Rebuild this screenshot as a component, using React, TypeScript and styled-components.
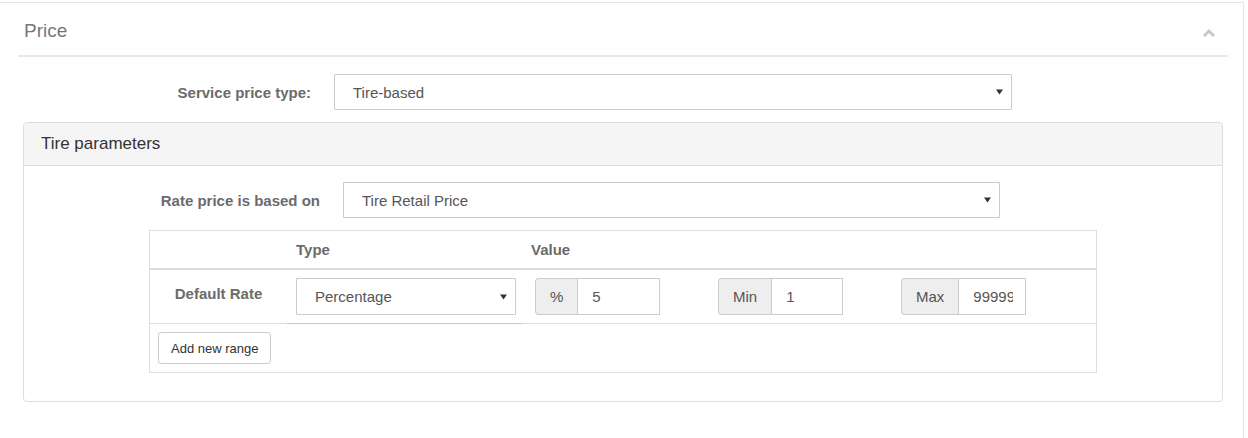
import styled, { createGlobalStyle } from 'styled-components'

const GlobalStyle = createGlobalStyle`
  body {
    margin: 0;
    background: #ffffff;
    font-family: "Liberation Sans", Arial, Helvetica, sans-serif;
    color: #555555;
  }
`

//styled-components
const Page = styled.div`
  padding-top: 2px;
  height: 436px;
`

const Section = styled.section`
  box-sizing: border-box;
  width: 1244px;
  height: 436px;
  border-top: 1px solid #e6e6e6;
  border-right: 1px solid #e6e6e6;
`

const SectionHeader = styled.div`
  display: flex;
  align-items: center;
  justify-content: space-between;
  margin: 0 15px 0 18px;
  padding: 17px 12px 14px 6px;
  border-bottom: 2px solid #e8e8e8;
`

const SectionTitle = styled.h2`
  margin: 0;
  font-size: 19px;
  line-height: 21px;
  font-weight: 400;
  color: #777777;
`

const Chevron = styled.svg`
  width: 14px;
  height: 10px;
  margin-top: 4px;
`

const FormRow = styled.div<{ $labelWidth: number; $top: number }>`
  display: flex;
  align-items: center;
  gap: 23px;
  margin-top: ${(p) => p.$top}px;
  & > label {
    width: ${(p) => p.$labelWidth}px;
  }
`

const Label = styled.label`
  box-sizing: border-box;
  text-align: right;
  font-size: 15px;
  font-weight: 700;
  color: #6b6b6b;
`

const SelectBox = styled.div<{ $width: number; $height: number }>`
  box-sizing: border-box;
  display: flex;
  align-items: center;
  justify-content: space-between;
  width: ${(p) => p.$width}px;
  height: ${(p) => p.$height}px;
  padding: 0 8px 0 18px;
  border: 1px solid #cccccc;
  border-radius: 1px;
  background: #ffffff;
  font-size: 15px;
  color: #555555;
`

const Caret = styled.svg`
  width: 7px;
  height: 6px;
`

const Panel = styled.div`
  box-sizing: border-box;
  width: 1200px;
  margin: 12px 0 0 23px;
  border: 1px solid #dddddd;
  border-radius: 4px;
  padding-bottom: 28px;
`

const PanelHeader = styled.div`
  padding: 11px 17px;
  background: #f5f5f5;
  border-bottom: 1px solid #dddddd;
  border-radius: 3px 3px 0 0;
  font-size: 17px;
  line-height: 20px;
  color: #333333;
`

const PanelBody = styled.div`
  padding-top: 16px;
`

const RateTable = styled.div`
  box-sizing: border-box;
  width: 948px;
  margin: 12px 0 0 125px;
  border: 1px solid #dddddd;
`

const TableRow = styled.div<{ $height: number; $thick?: boolean }>`
  display: grid;
  grid-template-columns: 137px 235px 1fr;
  align-items: center;
  height: ${(p) => p.$height}px;
  border-bottom: ${(p) => (p.$thick ? '2px' : '1px')} solid #dddddd;
  &:last-child {
    border-bottom: none;
  }
`

const HeadCell = styled.div`
  padding-left: 9px;
  font-size: 15px;
  font-weight: 700;
  color: #6b6b6b;
`

const RowLabel = styled.div`
  padding-bottom: 7px;
  text-align: center;
  font-size: 15px;
  font-weight: 700;
  color: #6b6b6b;
`

const TypeCell = styled.div`
  display: flex;
  align-items: center;
  height: 100%;
  padding-left: 9px;
  box-shadow: 0 1px 1px rgba(0, 0, 0, 0.08);
`

const ValueCell = styled.div`
  display: flex;
  gap: 58px;
  padding-left: 13px;
`

const InputGroup = styled.div`
  display: flex;
  width: 125px;
  height: 37px;
`

const Addon = styled.span`
  box-sizing: border-box;
  display: flex;
  align-items: center;
  padding: 0 14px;
  background: #eeeeee;
  border: 1px solid #cccccc;
  border-right: none;
  border-radius: 4px 0 0 4px;
  font-size: 15px;
  color: #555555;
`

const NumberInput = styled.input`
  box-sizing: border-box;
  flex: 1;
  min-width: 0;
  height: 37px;
  padding: 0 12px 0 14px;
  border: 1px solid #cccccc;
  border-radius: 0;
  background: #ffffff;
  font-family: "Liberation Sans", Arial, sans-serif;
  font-size: 15px;
  color: #555555;
  outline: none;
`

const ButtonRow = styled.div`
  padding: 8px;
  height: 32px;
`

const Button = styled.button`
  box-sizing: border-box;
  height: 32px;
  padding: 0 12px;
  border: 1px solid #cccccc;
  border-radius: 3px;
  background: #ffffff;
  font-family: "Liberation Sans", Arial, sans-serif;
  font-size: 13px;
  color: #333333;
`

const ranges = [
  { addon: '%', value: '5' },
  { addon: 'Min', value: '1' },
  { addon: 'Max', value: '99999' },
]

const Select: React.FC<{ value: string; width: number; height: number }> = (props) => {
  return (
    <SelectBox $width={props.width} $height={props.height}>
      <span>{props.value}</span>
      <Caret viewBox="0 0 7 6">
        <path d="M0 0.5 H7 L3.5 5.5 Z" fill="#333" />
      </Caret>
    </SelectBox>
  )
}

const App: React.FC = () => {
  return (
    <Page>
      <GlobalStyle />
      <Section>
        <SectionHeader>
          <SectionTitle>Price</SectionTitle>
          <Chevron viewBox="0 0 14 10">
            <path d="M2 8 L7 3 L12 8" fill="none" stroke="#c8c8c8" strokeWidth="3" />
          </Chevron>
        </SectionHeader>

        <FormRow $labelWidth={311} $top={17}>
          <Label>Service price type:</Label>
          <Select value="Tire-based" width={678} height={36} />
        </FormRow>

        <Panel>
          <PanelHeader>Tire parameters</PanelHeader>
          <PanelBody>
            <FormRow $labelWidth={296} $top={0}>
              <Label>Rate price is based on</Label>
              <Select value="Tire Retail Price" width={657} height={36} />
            </FormRow>

            <RateTable>
              <TableRow $height={37} $thick>
                <div />
                <HeadCell>Type</HeadCell>
                <HeadCell>Value</HeadCell>
              </TableRow>
              <TableRow $height={53}>
                <RowLabel>Default Rate</RowLabel>
                <TypeCell>
                  <Select value="Percentage" width={220} height={37} />
                </TypeCell>
                <ValueCell>
                  {ranges.map((r) => (
                    <InputGroup key={r.addon}>
                      <Addon>{r.addon}</Addon>
                      <NumberInput defaultValue={r.value} readOnly />
                    </InputGroup>
                  ))}
                </ValueCell>
              </TableRow>
              <ButtonRow>
                <Button>Add new range</Button>
              </ButtonRow>
            </RateTable>
          </PanelBody>
        </Panel>
      </Section>
    </Page>
  )
}
export default App
